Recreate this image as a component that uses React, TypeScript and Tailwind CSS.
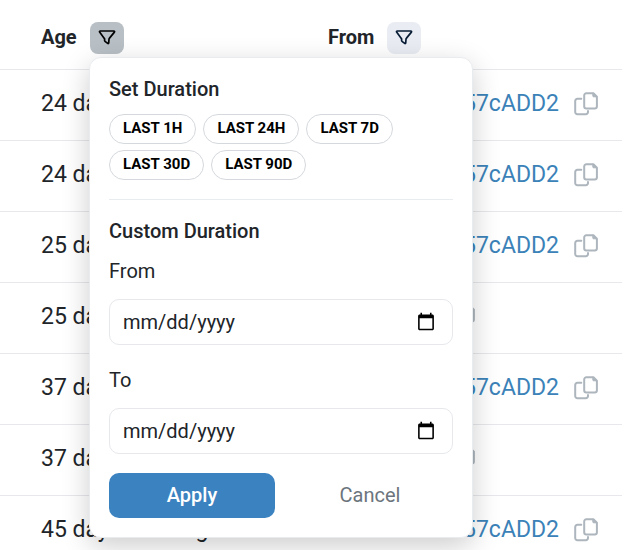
import { useState } from "react";

interface Row {
  id: number;
  age: string;
  from: string;
  isLink: boolean;
}

const ROWS: Row[] = [
  { id: 1, age: "24 days 3 hrs ago", from: "0xD5c08681...B57cADD2", isLink: true },
  { id: 2, age: "24 days 7 hrs ago", from: "0xD5c08681...B57cADD2", isLink: true },
  { id: 3, age: "25 days 2 hrs ago", from: "0xD5c08681...B57cADD2", isLink: true },
  { id: 4, age: "25 days 9 hrs ago", from: "Binance 7", isLink: false },
  { id: 5, age: "37 days 4 hrs ago", from: "0xD5c08681...B57cADD2", isLink: true },
  { id: 6, age: "37 days 6 hrs ago", from: "Binance 7", isLink: false },
  { id: 7, age: "45 days 5 hrs ago", from: "0xD5c08681...B57cADD2", isLink: true },
];

const DURATIONS = ["LAST 1H", "LAST 24H", "LAST 7D", "LAST 30D", "LAST 90D"];

function FunnelIcon() {
  return (
    <svg width="18" height="16" viewBox="0 0 18 16" fill="none" stroke="currentColor" strokeWidth="1.7" strokeLinecap="round" strokeLinejoin="round">
      <path d="M2.2 1h13.6c.7 0 1 .6.6 1.1L11.3 8.4c-.2.2-.3.5-.3.8l-.3 3.7c0 .6-.6.8-1 .5L7 11.3c-.3-.2-.4-.5-.4-.8V9.1c0-.3-.1-.5-.3-.7L1.6 2.1C1.300 1.600 1.600 1 2.200 1Z" />
    </svg>
  );
}

function CopyIcon() {
  return (
    <svg width="24" height="24" viewBox="0 0 24 24" fill="none" stroke="currentColor" strokeWidth="2" strokeLinecap="round" strokeLinejoin="round">
      <path d="M7.3 6.8H3.4a2.2 2.2 0 0 0-2.2 2.200v11a2.200 2.200 0 0 0 2.200 2.200h8.400a2.200 2.200 0 0 0 2.200-2.200v-1" />
      <path d="M12.400 1.200h7l3.500 3.500v9.600a2.200 2.200 0 0 1-2.200 2.200h-8.300a2.200 2.200 0 0 1-2.200-2.200V3.400a2.200 2.200 0 0 1 2.200-2.200Z" />
      <path d="M18.800 1.500v2.400c0 .6.300.9.900.9h2.800Z" fill="currentColor" strokeWidth="1" />
    </svg>
  );
}

function DateField({ id, label }: { id: string; label: string }) {
  return (
    <div>
      <label htmlFor={id} className="block leading-[30px] mb-[13px]">
        {label}
      </label>
      <input
        id={id}
        type="date"
        className="block w-full h-[46px] pl-[13px] pr-[14px] rounded-[10px] border border-[#e6e8eb] bg-white text-xl text-[#212529] [&::-webkit-datetime-edit-month-field]:p-0 [&::-webkit-datetime-edit-day-field]:p-0 [&::-webkit-datetime-edit-year-field]:p-0"
      />
    </div>
  );
}

function DurationPopover({ onClose }: { onClose: () => void }) {
  return (
    <div className="absolute left-[89px] top-[57px] z-10 w-[384px] px-[19px] pt-4 pb-[19px] bg-white rounded-xl border border-[#e9ecef] shadow-[0_8px_28px_rgba(0,0,0,0.2)] text-left font-normal text-xl">
      <h3 className="font-medium leading-[30px] mb-[10px]">Set Duration</h3>
      <div className="flex flex-wrap gap-x-[7px] gap-y-[6px]">
        {DURATIONS.map((duration) => (
          <button
            key={duration}
            type="button"
            className="h-[30px] px-[13px] pb-[2px] rounded-full border border-[#d5d9dd] text-[15px] font-bold text-black"
          >
            {duration}
          </button>
        ))}
      </div>

      <hr className="mt-[19px] mb-4 border-[#e9ecef]" />

      <h3 className="font-medium leading-[30px] mb-[10px]">Custom Duration</h3>
      <div className="grid gap-5">
        <DateField id="from-date" label="From" />
        <DateField id="to-date" label="To" />
      </div>

      {/* Actions */}
      <div className="grid grid-cols-2 gap-3 mt-[19px]">
        <button type="button" className="h-[45px] pb-[2px] rounded-[10px] bg-[#3b82c0] text-white font-medium">
          Apply
        </button>
        <button type="button" onClick={onClose} className="h-[45px] pb-[2px] text-[#6c757d]">
          Cancel
        </button>
      </div>
    </div>
  );
}

export default function App() {
  const [open, setOpen] = useState(true);

  return (
    <div className="h-screen overflow-hidden bg-white text-[#212529] font-[Roboto,sans-serif]">
      <table className="w-full table-fixed border-collapse">
        <thead>
          <tr className="h-[69px] border-b border-[#e6e8eb] text-xl">
            <th className="relative w-[328px] p-0 pl-[41px] pt-[7px] font-bold">
              <div className="flex items-center gap-[13px] leading-[30px]">
                <span className="pb-[2px]">Age</span>
                <button
                  type="button"
                  aria-label="Filter by age"
                  onClick={() => setOpen(!open)}
                  className="flex items-center justify-center w-[34px] h-8 rounded-lg bg-[#b8bfc5] text-black"
                >
                  <FunnelIcon />
                </button>
              </div>
              {open && <DurationPopover onClose={() => setOpen(false)} />}
            </th>
            <th className="p-0 pt-[7px] font-bold">
              <div className="flex items-center gap-[13px] leading-[30px]">
                <span className="pb-[2px]">From</span>
                <button
                  type="button"
                  aria-label="Filter by sender"
                  className="flex items-center justify-center w-[34px] h-8 rounded-lg bg-[#e9ecf3] text-[#081d35]"
                >
                  <FunnelIcon />
                </button>
              </div>
            </th>
          </tr>
        </thead>
        <tbody>
          {ROWS.map((row) => (
            <tr key={row.id} className="h-[71px] border-b border-[#e6e8eb] text-[23px]">
              <td className="p-0 pl-[41px] whitespace-nowrap">{row.age}</td>
              <td className="p-0">
                <div className="flex items-center gap-[15px] whitespace-nowrap">
                  {row.isLink ? (
                    <a href="#" className="flex justify-end w-[231px] text-[#3b82b8]">
                      {row.from}
                    </a>
                  ) : (
                    <span className="w-[108px]">{row.from}</span>
                  )}
                  <button type="button" aria-label="Copy address" className="pb-[2px] text-[#adb5bd]">
                    <CopyIcon />
                  </button>
                </div>
              </td>
            </tr>
          ))}
        </tbody>
      </table>
    </div>
  );
}
